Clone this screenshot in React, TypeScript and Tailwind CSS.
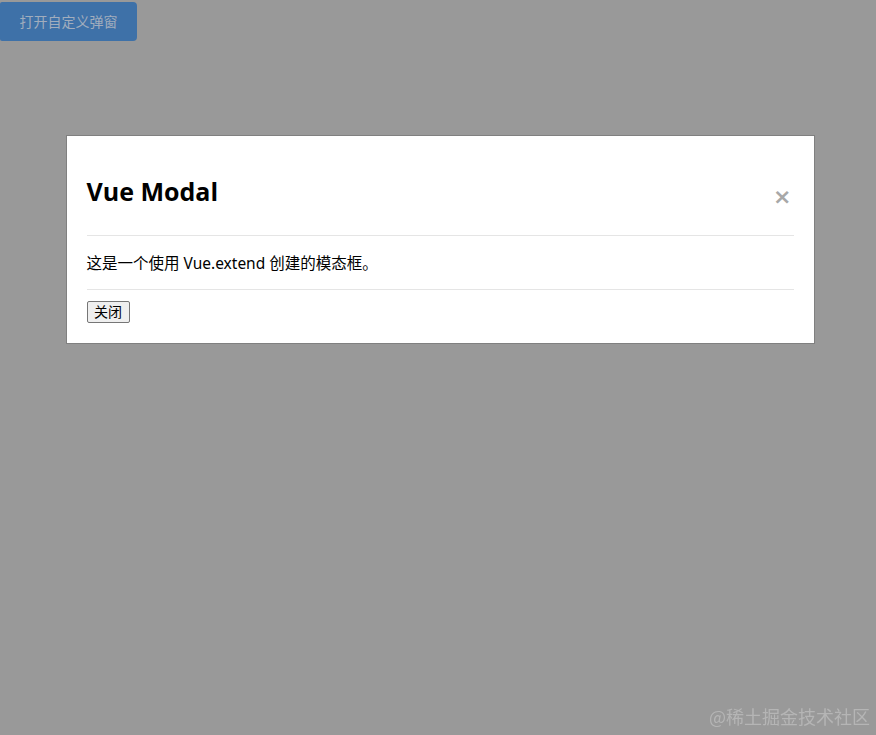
import React from "react";

export default function App() {
  return (
    <div className="relative min-h-[735px] bg-white" style={{ fontFamily: '"Noto Sans", "Noto Sans CJK SC", sans-serif' }}>
      <div className="fixed inset-0 bg-[#999999] flex justify-center items-start pt-[135px]">
        <div className="w-[749px] bg-white border border-[#808080] px-[20px] ml-[4px]">
          <div className="flex items-center justify-between pt-[39px] pb-[27px] border-b border-[#e5e5e5]">
            <h2 className="text-[25px] leading-[33px] font-bold text-black" style={{ fontFamily: '"Open Sans", "Noto Sans", sans-serif' }}>Vue Modal</h2>
            <span className="text-[#a8a8a8] text-[22px] font-bold leading-none mr-[2px] mt-[10px]" style={{ fontFamily: '"DejaVu Sans", sans-serif' }}>×</span>
          </div>
          <div className="pt-[16px] pb-[15px] border-b border-[#e5e5e5]">
            <p className="text-[15.5px] leading-[22px] text-black">这是一个使用 Vue.extend 创建的模态框。</p>
          </div>
          <div className="flex pt-[11px] pb-[20px]">
            <button className="h-[22px] w-[43px] text-[14px] leading-none bg-[#efefef] border border-[#767676] rounded-[2px] text-black">关闭</button>
          </div>
        </div>
      </div>
      <div className="relative z-10 pt-[2px]">
        <button className="w-[137px] h-[39px] bg-[#3e71a8] text-[#a1adbd] text-[14px] rounded-r-[4px] rounded-l-[2px]">打开自定义弹窗</button>
      </div>
      <div className="fixed right-[6px] bottom-[5px] text-[18px] text-[#b5b5b5] z-10" style={{ fontFamily: '"Noto Sans CJK SC", sans-serif' }}>@稀土掘金技术社区</div>
    </div>
  );
}
